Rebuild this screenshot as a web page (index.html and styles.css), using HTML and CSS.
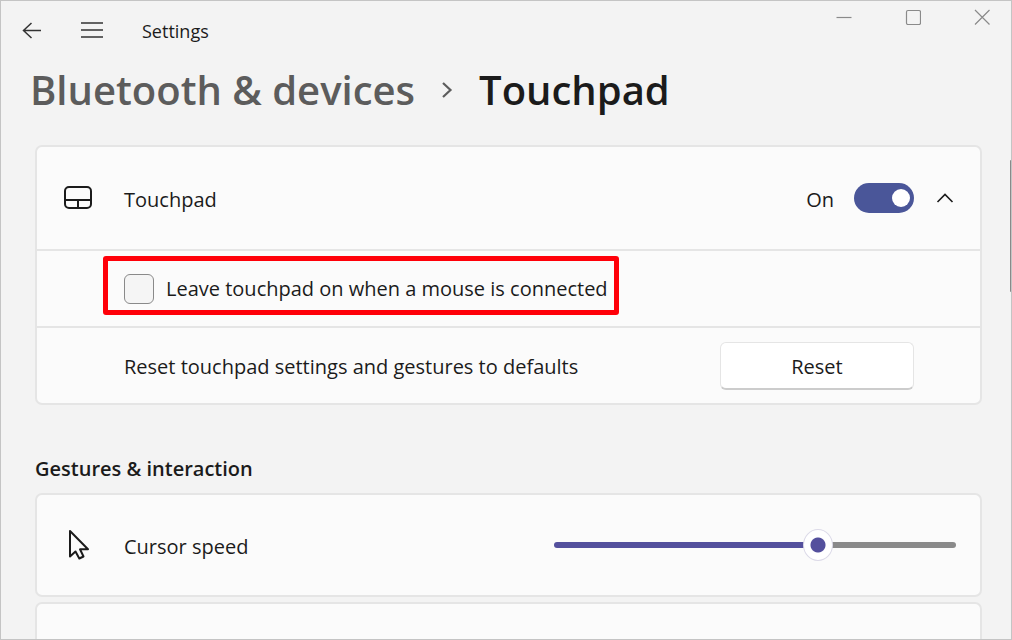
FILE: index.html
```html
<!DOCTYPE html>
<html lang="en">
<head>
  <meta charset="UTF-8" />
  <meta name="viewport" content="width=device-width, initial-scale=1.0" />
  <title>Settings</title>
  <link rel="stylesheet" href="styles.css">
</head>
<body>
  <div class="window">
    <header class="titlebar">
      <button class="nav-btn" aria-label="Back">
        <svg width="20" height="20" viewBox="0 0 20 20"><path d="M19 9.500H1.500M9.500 2L1.500 9.500l8 7.500" /></svg>
      </button>
      <button class="nav-btn" aria-label="Menu">
        <svg width="24" height="20" viewBox="0 0 24 20"><path d="M1 2h22M1 9h22M1 16h22" /></svg>
      </button>
      <span class="app-name">Settings</span>
      <div class="caption-btns">
        <button aria-label="Minimize"><svg width="16" height="16" viewBox="0 0 16 16"><path d="M0.500 8.500h15" /></svg></button>
        <button aria-label="Maximize"><svg width="16" height="16" viewBox="0 0 16 16"><rect x="1.500" y="1.500" width="14" height="14" rx="1.500" /></svg></button>
        <button aria-label="Close"><svg width="16" height="16" viewBox="0 0 16 16"><path d="M1 1l14.500 14.500M15.500 1L1 15.500" /></svg></button>
      </div>
    </header>

    <main>
      <h1 class="breadcrumb">
        <a href="#">Bluetooth &amp; devices</a>
        <svg width="12" height="18" viewBox="0 0 12 18"><path d="M2 2l7.500 7L2 16" /></svg>
        <span>Touchpad</span>
      </h1>

      <section class="card">
        <div class="row row-main row-head">
          <svg class="row-icon" width="30" height="26" viewBox="0 0 30 26">
            <rect x="2" y="2" width="26" height="21" rx="4" />
            <path d="M2 15h26M15 15v8" />
          </svg>
          <label class="row-label" for="touchpad">Touchpad</label>
          <span class="state">On</span>
          <input type="checkbox" class="toggle" id="touchpad" role="switch" checked />
          <button class="expand" aria-label="Collapse">
            <svg width="18" height="12" viewBox="0 0 18 12"><path d="M1.500 10L9 2.500l7.500 7.500" /></svg>
          </button>
        </div>
        <div class="row row-check">
          <label class="highlight">
            <input type="checkbox" class="check" />
            Leave touchpad on when a mouse is connected
          </label>
        </div>
        <div class="row row-sub">
          <span class="row-label">Reset touchpad settings and gestures to defaults</span>
          <button class="reset">Reset</button>
        </div>
      </section>

      <h2>Gestures &amp; interaction</h2>

      <section class="card">
        <div class="row row-main">
          <svg class="row-icon" width="30" height="32" viewBox="0 0 30 32">
            <path d="M7 2v25.500l5.500-5 3.800 7 4.200-2-3.500-7.200h8z" />
          </svg>
          <label class="row-label" for="speed">Cursor speed</label>
          <input type="range" class="slider" id="speed" min="0" max="100" value="67" />
        </div>
      </section>

      <section class="card">
        <div class="row row-main"></div>
      </section>
    </main>

    <div class="scrollbar"></div>
  </div>
</body>
</html>
```

FILE: styles.css
```css
* {
  box-sizing: border-box;
}

body {
  margin: 0;
  font-family: "Open Sans", "Noto Sans", sans-serif;
  font-size: 20px;
  line-height: 28px;
  color: #1b1b1b;
  background: #f3f3f3;
}

button {
  font: inherit;
  color: inherit;
  border: none;
  background: none;
  padding: 0;
}

svg {
  display: block;
  flex: none;
  fill: none;
  stroke: #1b1b1b;
}

.window {
  position: relative;
  height: 100vh;
  overflow: hidden;
  border: 1px solid #c4c4c4;
}

/* title bar */
.titlebar {
  display: flex;
  align-items: center;
  height: 60px;
  padding-left: 11px;
}

.nav-btn {
  display: grid;
  place-items: center;
  width: 40px;
  height: 40px;
  margin-right: 20px;
}

.nav-btn svg {
  stroke: #333;
  stroke-width: 1.5;
}

.app-name {
  margin-left: 10px;
  font-size: 18px;
}

.caption-btns {
  display: flex;
  align-self: flex-start;
  gap: 23px;
  margin-left: auto;
  padding-right: 6px;
}

.caption-btns button {
  display: grid;
  place-items: center;
  width: 46px;
  height: 32px;
}

.caption-btns svg {
  stroke: #8a8a8a;
  stroke-width: 1.2;
}

/* page */
main {
  padding: 0 29px 0 34px;
}

.breadcrumb {
  display: flex;
  align-items: center;
  gap: 26px;
  margin: 0 0 26px -5px;
  font-size: 40px;
  line-height: 58px;
  font-weight: 600;
}

.breadcrumb a {
  color: #5c5c5c;
  text-decoration: none;
}

.breadcrumb svg {
  stroke: #5c5c5c;
  stroke-width: 2.2;
}

h2 {
  margin: 50px 0 10px;
  font-size: 20px;
  line-height: 28px;
  font-weight: 600;
}

.card {
  margin-bottom: 5px;
  border: 2px solid #e5e5e5;
  border-radius: 7px;
  background: #fbfbfb;
}

.row {
  display: flex;
  align-items: center;
  padding-left: 87px;
}

.row + .row {
  border-top: 2px solid #e5e5e5;
}

.row-main {
  height: 100px;
  padding: 0 24px 0 26px;
}

.row-head {
  height: 102px;
}

.row-icon {
  width: 30px;
  margin-right: 31px;
  stroke-width: 2;
  stroke-linejoin: round;
}

.row-label {
  flex: 1;
  padding-top: 3px;
}

.state {
  margin-right: 20px;
  padding-top: 3px;
}

.toggle {
  appearance: none;
  display: flex;
  align-items: center;
  justify-content: flex-end;
  width: 60px;
  height: 30px;
  margin: 0;
  padding: 0 4px;
  border-radius: 15px;
  background: #4a5699;
}

.toggle::before {
  content: "";
  width: 18px;
  height: 18px;
  border-radius: 50%;
  background: #fff;
}

.toggle:not(:checked) {
  justify-content: flex-start;
  background: #8a8a8a;
}

.expand {
  margin: 0 2px 0 22px;
}

.expand svg {
  stroke-width: 1.6;
}

.row-check {
  align-items: flex-start;
  height: 77px;
  padding: 5px 0 0 66px;
}

.highlight {
  display: flex;
  align-items: center;
  gap: 12px;
  padding: 13px 6px 6px 16px;
  border: 5px solid #ff0009;
  border-radius: 3px;
}

.check {
  appearance: none;
  width: 30px;
  height: 30px;
  margin: 0;
  border: 1px solid #8a8a8a;
  border-radius: 6px;
  background: #f5f5f5;
}

.check:checked {
  background: #4a5699;
}

.row-sub {
  height: 77px;
  padding-right: 66px;
}

.reset {
  width: 194px;
  height: 48px;
  padding-top: 3px;
  border: 1px solid #e5e5e5;
  border-bottom: 2px solid #ccc;
  border-radius: 6px;
  background: #fff;
}

/* slider */
.slider {
  appearance: none;
  width: 402px;
  height: 32px;
  margin: 0;
  background: none;
}

.slider::-webkit-slider-runnable-track {
  height: 6px;
  border-radius: 3px;
  background: linear-gradient(to right, #54509d 66%, #8a8a8a 66%);
}

.slider::-webkit-slider-thumb {
  appearance: none;
  width: 30px;
  height: 32px;
  margin-top: -13px;
  border: 1px solid #dcdae8;
  border-radius: 50%;
  background: radial-gradient(circle, #54509d 7px, #fff 8px);
}

.scrollbar {
  position: absolute;
  top: 159px;
  right: -1px;
  width: 2px;
  height: 132px;
  border-radius: 1px;
  background: #8a8a8a;
}
```
